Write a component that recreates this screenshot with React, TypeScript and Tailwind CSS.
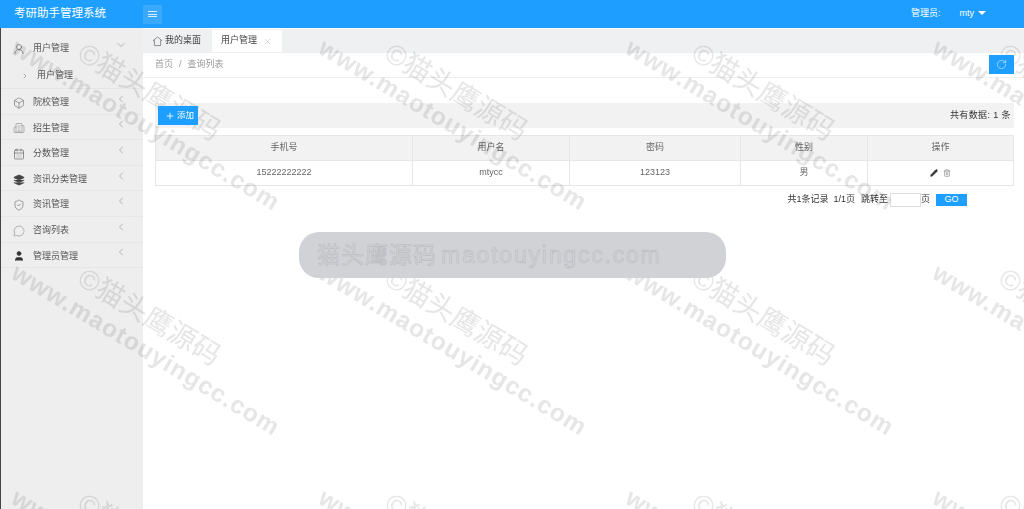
import { ChevronDown, ChevronLeft, ChevronRight, Plus, RotateCw, X, UserRound, Box, Building2, CalendarDays, Layers, ShieldCheck, MessageCircle, User, Pencil, Trash2 } from "lucide-react";

const menus = [
  { name: "院校管理", icon: Box, cls: "text-[#666]", fill: "none" },
  { name: "招生管理", icon: Building2, cls: "text-[#888]", fill: "none" },
  { name: "分数管理", icon: CalendarDays, cls: "text-[#555]", fill: "none" },
  { name: "资讯分类管理", icon: Layers, cls: "text-[#444]", fill: "#444" },
  { name: "资讯管理", icon: ShieldCheck, cls: "text-[#666]", fill: "none" },
  { name: "咨询列表", icon: MessageCircle, cls: "text-[#888]", fill: "none" },
  { name: "管理员管理", icon: User, cls: "text-[#333]", fill: "#333" },
];

function Watermarks() {
  return (
    <div className="absolute inset-0 overflow-hidden pointer-events-none mix-blend-multiply">
      <div className="grid grid-cols-[repeat(4,307px)] auto-rows-[225px]">
        {Array.from({ length: 12 }).map((_, i) => (
          <div key={i} className="relative">
            <div className="absolute left-[88px] top-[38px] origin-top-left rotate-[31deg] whitespace-nowrap text-[28px] leading-[30px] text-[#e6e6e6]">
              ©猫头鹰源码
            </div>
            <div className="absolute left-[22px] top-[32px] origin-top-left rotate-[31deg] whitespace-nowrap text-[24.5px] leading-[32px] tracking-[1.1px] font-bold text-[#e6e6e6]">
              www.maotouyingcc.com
            </div>
          </div>
        ))}
      </div>
    </div>
  );
}

export default function App() {
  return (
    <div className="relative h-[509px] overflow-hidden bg-white text-[9px] text-[#666] font-['Liberation_Sans','Noto_Sans_CJK_SC',sans-serif]">
      {/* header */}
      <div className="relative z-10 h-[28px] bg-[#1e9fff] flex items-center text-white">
        <div className="w-[143px] pl-[14px] text-[11.5px]">考研助手管理系统</div>
        <div className="w-[19px] h-[19px] bg-[#3aa9fb] flex items-center justify-center">
          <div className="w-[9px] h-[6px] border-y border-white/80 relative">
            <div className="absolute left-0 right-0 top-[1.5px] h-px bg-white/80" />
          </div>
        </div>
        <div className="ml-auto flex items-center pr-[38px]">
          <span>管理员:</span>
          <span className="ml-[19px]">mty</span>
          <div className="ml-[4px] mb-[2px] border-x-[4px] border-x-transparent border-t-[4px] border-t-white" />
        </div>
      </div>

      <div className="flex h-[481px]">
        {/* sidebar */}
        <div className="w-[143px] bg-[#eeeeee] border-l border-[#444] text-[#555]">
          <div className="h-[38px] pt-[3px] flex items-center">
            <UserRound size={12} className="ml-[12px] mr-[8px]" strokeWidth={1.2} />
            <span>用户管理</span>
            <ChevronDown size={12} className="ml-auto mr-[16px] mb-[8px] text-[#777]" strokeWidth={1} />
          </div>
          <div className="h-[23px] pb-[3px] flex items-center border-b border-[#e4e4e4]">
            <ChevronRight size={8} className="ml-[20px] mr-[8px] text-[#888]" />
            <span>用户管理</span>
          </div>
          {menus.map((m) => (
            <div key={m.name} className="h-[25.6px] pt-[3px] flex items-center border-b border-[#e6e6e6]">
              <m.icon size={12} className={`ml-[12px] mr-[8px] ${m.cls}`} fill={m.fill} strokeWidth={1.2} />
              <span>{m.name}</span>
              <ChevronLeft size={12} className="ml-auto mr-[16px] mb-[8px] text-[#777]" strokeWidth={1} />
            </div>
          ))}
        </div>

        {/* main */}
        <div className="flex-1 flex flex-col">
          <div className="h-[23px] mt-px bg-[#eff0f2] flex items-end text-[#444]">
            <div className="h-[22px] w-[69px] flex items-center pl-[9px]">
              <svg width="11" height="11" viewBox="0 0 11 11" className="mr-[2px]" fill="none" stroke="#777" strokeWidth="0.8">
                <path d="M5.5 1 L10 4.6 L8.6 4.6 L8.6 9.6 L2.4 9.6 L2.4 4.6 L1 4.6 Z" />
              </svg>
              我的桌面
            </div>
            <div className="h-[22px] w-[70px] bg-white flex items-center pl-[9px]">
              用户管理
              <X size={9} strokeWidth={1.2} className="ml-[6px] text-[#aaa]" />
            </div>
          </div>

          <div className="h-[26px] border-t border-b border-[#eee] flex items-center pl-[12px] text-[#999]">
            <span>首页</span>
            <span className="mx-[6px]">/</span>
            <span>查询列表</span>
            <div className="relative z-10 ml-auto mr-[10px] mb-[1px] w-[25px] h-[19px] bg-[#1e9fff] flex items-center justify-center text-white">
              <RotateCw size={11} strokeWidth={1.1} />
            </div>
          </div>

          <div className="pl-[12px] pr-[10px] pt-[25px]">
            <div className="h-[25px] bg-[#f2f2f2] flex items-center pl-[3px] pr-[3px]">
              <div className="relative z-10 w-[40px] h-[19px] bg-[#1e9fff] text-white text-[8.5px] flex items-center justify-center pl-[3px]">
                <Plus size={10} strokeWidth={2} className="mr-[2px]" />
                添加
              </div>
              <div className="ml-auto text-[#333] tracking-[0.4px]">共有数据: 1 条</div>
            </div>

            <table className="mt-[7px] w-[859px] table-fixed border-collapse text-center">
              <thead>
                <tr className="h-[25px] bg-[#f2f2f2]">
                  <th className="w-[257px] border border-[#e6e6e6] font-normal">手机号</th>
                  <th className="w-[157px] border border-[#e6e6e6] font-normal">用户名</th>
                  <th className="w-[171px] border border-[#e6e6e6] font-normal">密码</th>
                  <th className="w-[127px] border border-[#e6e6e6] font-normal">性别</th>
                  <th className="border border-[#e6e6e6] font-normal">操作</th>
                </tr>
              </thead>
              <tbody>
                <tr className="h-[25px]">
                  <td className="border border-[#e6e6e6]">15222222222</td>
                  <td className="border border-[#e6e6e6]">mtycc</td>
                  <td className="border border-[#e6e6e6]">123123</td>
                  <td className="border border-[#e6e6e6]">男</td>
                  <td className="border border-[#e6e6e6]">
                    <div className="flex items-center justify-center gap-[5px]">
                      <Pencil size={8} className="text-[#333]" fill="#333" />
                      <Trash2 size={8} className="text-[#888]" />
                    </div>
                  </td>
                </tr>
              </tbody>
            </table>

            <div className="mt-[7px] flex items-center justify-end pr-[47px] text-[#333]">
              <span>共1条记录</span>
              <span className="ml-[5px]">1/1页</span>
              <span className="ml-[6px]">跳转至</span>
              <div className="ml-[2px] w-[31px] h-[14px] border border-[#ddd] bg-white" />
              <span>页</span>
              <div className="relative z-10 ml-[6px] w-[31px] h-[12px] bg-[#1e9fff] text-white flex items-center justify-center">GO</div>
            </div>
          </div>
        </div>
      </div>

      <Watermarks />

      {/* toast */}
      <div className="absolute z-20 left-[299px] top-[232px] w-[427px] h-[46px] rounded-[20px] bg-[#d1d2d6] flex items-center pl-[18px] text-[23px] tracking-[1px] text-[#d1d2d6] [-webkit-text-stroke:0.5px_#b5b6bb]">
        猫头鹰源码
        <span className="ml-[4px] tracking-[1.8px]">maotouyingcc.com</span>
      </div>
    </div>
  );
}
